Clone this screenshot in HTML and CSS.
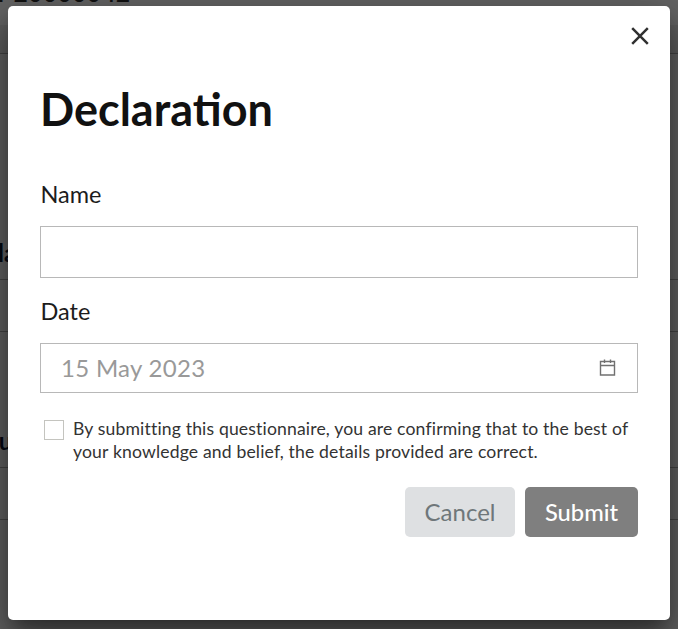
FILE: index.html
```html
<!DOCTYPE html>
<html lang="en">
<head>
<meta charset="utf-8">
<title>Declaration</title>
<link rel="stylesheet" href="styles.css">
</head>
<body>
<div class="page" aria-hidden="true">
  <div class="page-title"><span>r 20000042</span></div>
  <div class="page-band"></div>
  <div class="page-section first"><span>la</span></div>
  <div class="page-row"></div>
  <div class="page-section second"><span>ou</span></div>
  <div class="page-row"></div>
</div>
<main class="dialog" role="dialog" aria-labelledby="title">
  <button class="close" type="button" aria-label="Close">
    <svg width="20" height="20" viewBox="0 0 20 20"><path d="M2.2 2.2 17.8 17.8M17.8 2.2 2.2 17.8"/></svg>
  </button>
  <h1 class="title" id="title">Declaration</h1>
  <label class="label" for="name">Name</label>
  <input class="field name" id="name" type="text">
  <label class="label" for="date">Date</label>
  <div class="field date" id="date">
    <span>15 May 2023</span>
    <svg width="18" height="18" viewBox="0 0 18 18"><path d="M1.5 2.5h14v13.5h-14zM1.5 6.5h14M5.5 .5v3.5M11.5 .5v3.5"/></svg>
  </div>
  <label class="consent">
    <input class="check" type="checkbox">
    <span>By submitting this questionnaire, you are confirming that to the best of<br>your knowledge and belief, the details provided are correct.</span>
  </label>
  <div class="actions">
    <button class="btn cancel" type="button">Cancel</button>
    <button class="btn submit" type="button">Submit</button>
  </div>
</main>
</body>
</html>
```
FILE: styles.css
```css
* { box-sizing: border-box; }
body {
  margin: 0;
  height: 629px;
  overflow: hidden;
  position: relative;
  background: #666;
  font-family: Lato, sans-serif;
  color: #111;
}
.page { display: flex; flex-direction: column; height: 629px; }
.page-title {
  height: 25px;
  display: flex;
  align-items: flex-start;
  font-size: 24px;
  font-weight: 700;
  line-height: 24px;
}
.page-title span { margin: -19px 0 0 -2px; letter-spacing: .7px; }
.page-band { height: 29px; background: #606060; border-bottom: 1px solid #484848; }
.page-section {
  display: flex;
  align-items: flex-end;
  border-bottom: 1px solid #484848;
  font-size: 24px;
  font-weight: 700;
  line-height: 28px;
  color: #060a14;
}
.page-section span { margin-left: -2px; }
.first { height: 226px; padding-bottom: 12px; }
.second { height: 136px; padding-bottom: 12px; }
.second span { margin-left: -15px; }
.page-row { height: 52px; border-bottom: 1px solid #484848; }
.dialog {
  position: absolute;
  left: 8px;
  top: 6px;
  width: 662px;
  height: 614px;
  padding: 20px 32px 0;
  display: flex;
  flex-direction: column;
  background: #fff;
  border-radius: 5px;
  box-shadow: 0 11px 15px -7px rgba(0,0,0,.3), 0 24px 38px 3px rgba(0,0,0,.3), 0 9px 46px 8px rgba(0,0,0,.22);
}
.close {
  align-self: flex-end;
  width: 20px;
  height: 20px;
  margin-right: -12px;
  padding: 0;
  border: 0;
  background: none;
}
.close svg { display: block; }
.close path { fill: none; stroke: #303030; stroke-width: 2.5; }
.title {
  margin: 35px 0 0 0;
  font-size: 45px;
  font-weight: 700;
  line-height: 56px;
}
.label { margin: 42px 0 0 .5px; font-size: 23.5px; line-height: 30px; color: #1c1c1c; }
.field { width: 598px; border: 1px solid #b8b8b8; background: #fff; }
.name { height: 52px; margin-top: 17px; padding: 0 20px; font: 24px Lato, sans-serif; }
.name + .label { margin-top: 18px; }
.date {
  height: 50px;
  margin-top: 17px;
  padding: 0 20px;
  display: flex;
  align-items: center;
  justify-content: space-between;
  font-size: 24px;
  letter-spacing: .3px;
  color: #999;
}
.date span { margin-top: -1px; }
.date path { fill: none; stroke: #707070; stroke-width: 1.4; }
.consent {
  display: flex;
  margin: 24px 0 0 4px;
  font-size: 17.6px;
  line-height: 23px;
  letter-spacing: .15px;
  font-variant-ligatures: none;
  color: #333;
  white-space: nowrap;
}
.check {
  appearance: none;
  flex: none;
  width: 20px;
  height: 20px;
  margin: 3px 9px 0 0;
  border: 1px solid #c4c4bf;
}
.actions { display: flex; justify-content: flex-end; gap: 10px; margin-top: 24px; }
.btn {
  height: 50px;
  padding: 0;
  border: 0;
  border-radius: 5px;
  font: 24px Lato, sans-serif;
}
.cancel { width: 110px; padding-bottom: 1px; background: #dee0e2; color: #6f777a; }
.submit { width: 113px; background: #7f7f7f; color: #fff; font-weight: 500; font-size: 23.7px; }
```
